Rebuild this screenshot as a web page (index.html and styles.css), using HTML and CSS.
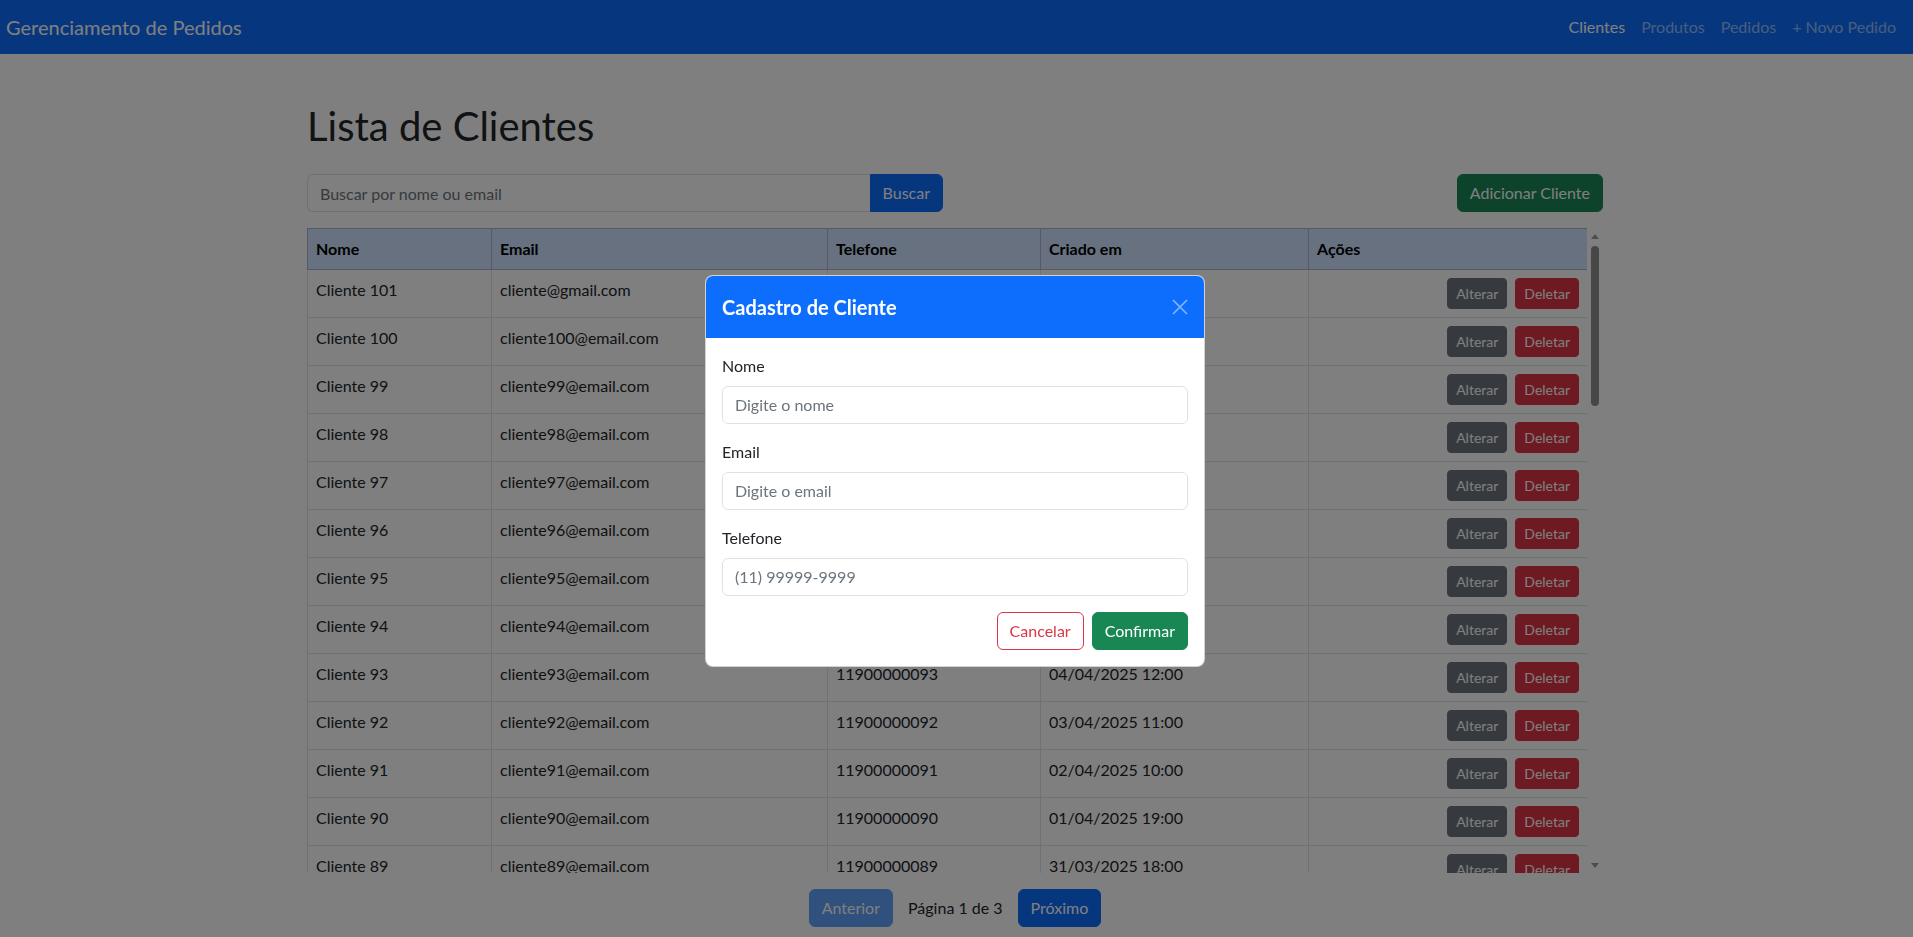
FILE: index.html
```html
<!DOCTYPE html>
<html lang="pt-BR">
<head>
<meta charset="utf-8">
<title>Gerenciamento de Pedidos</title>
<link rel="stylesheet" href="styles.css">
</head>
<body>
<nav class="navbar">
  <a class="brand" href="#">Gerenciamento de Pedidos</a>
  <ul class="nav-links">
    <li><a class="nav-link active" href="#">Clientes</a></li>
    <li><a class="nav-link" href="#">Produtos</a></li>
    <li><a class="nav-link" href="#">Pedidos</a></li>
    <li><a class="nav-link" href="#">+ Novo Pedido</a></li>
  </ul>
</nav>

<main class="container">
  <h1 class="page-title">Lista de Clientes</h1>
  <div class="toolbar">
    <form class="search-group">
      <input class="search-input" type="text" placeholder="Buscar por nome ou email">
      <button class="btn btn-primary" type="button">Buscar</button>
    </form>
    <button class="btn btn-success" type="button">Adicionar Cliente</button>
  </div>

  <div class="table-frame">
    <div class="table-scroll">
      <table class="clients">
        <colgroup>
          <col class="c-nome"><col class="c-email"><col class="c-tel"><col class="c-data"><col class="c-acoes">
        </colgroup>
        <thead>
          <tr><th>Nome</th><th>Email</th><th>Telefone</th><th>Criado em</th><th>Ações</th></tr>
        </thead>
        <tbody>
          <tr><td>Cliente 101</td><td>cliente@gmail.com</td><td>11900000101</td><td>12/04/2025 10:00</td><td><div class="row-actions"><button class="btn btn-sm btn-secondary">Alterar</button><button class="btn btn-sm btn-danger">Deletar</button></div></td></tr>
          <tr><td>Cliente 100</td><td>cliente100@email.com</td><td>11900000100</td><td>11/04/2025 19:00</td><td><div class="row-actions"><button class="btn btn-sm btn-secondary">Alterar</button><button class="btn btn-sm btn-danger">Deletar</button></div></td></tr>
          <tr><td>Cliente 99</td><td>cliente99@email.com</td><td>11900000099</td><td>10/04/2025 18:00</td><td><div class="row-actions"><button class="btn btn-sm btn-secondary">Alterar</button><button class="btn btn-sm btn-danger">Deletar</button></div></td></tr>
          <tr><td>Cliente 98</td><td>cliente98@email.com</td><td>11900000098</td><td>09/04/2025 17:00</td><td><div class="row-actions"><button class="btn btn-sm btn-secondary">Alterar</button><button class="btn btn-sm btn-danger">Deletar</button></div></td></tr>
          <tr><td>Cliente 97</td><td>cliente97@email.com</td><td>11900000097</td><td>08/04/2025 16:00</td><td><div class="row-actions"><button class="btn btn-sm btn-secondary">Alterar</button><button class="btn btn-sm btn-danger">Deletar</button></div></td></tr>
          <tr><td>Cliente 96</td><td>cliente96@email.com</td><td>11900000096</td><td>07/04/2025 15:00</td><td><div class="row-actions"><button class="btn btn-sm btn-secondary">Alterar</button><button class="btn btn-sm btn-danger">Deletar</button></div></td></tr>
          <tr><td>Cliente 95</td><td>cliente95@email.com</td><td>11900000095</td><td>06/04/2025 14:00</td><td><div class="row-actions"><button class="btn btn-sm btn-secondary">Alterar</button><button class="btn btn-sm btn-danger">Deletar</button></div></td></tr>
          <tr><td>Cliente 94</td><td>cliente94@email.com</td><td>11900000094</td><td>05/04/2025 13:00</td><td><div class="row-actions"><button class="btn btn-sm btn-secondary">Alterar</button><button class="btn btn-sm btn-danger">Deletar</button></div></td></tr>
          <tr><td>Cliente 93</td><td>cliente93@email.com</td><td>11900000093</td><td>04/04/2025 12:00</td><td><div class="row-actions"><button class="btn btn-sm btn-secondary">Alterar</button><button class="btn btn-sm btn-danger">Deletar</button></div></td></tr>
          <tr><td>Cliente 92</td><td>cliente92@email.com</td><td>11900000092</td><td>03/04/2025 11:00</td><td><div class="row-actions"><button class="btn btn-sm btn-secondary">Alterar</button><button class="btn btn-sm btn-danger">Deletar</button></div></td></tr>
          <tr><td>Cliente 91</td><td>cliente91@email.com</td><td>11900000091</td><td>02/04/2025 10:00</td><td><div class="row-actions"><button class="btn btn-sm btn-secondary">Alterar</button><button class="btn btn-sm btn-danger">Deletar</button></div></td></tr>
          <tr><td>Cliente 90</td><td>cliente90@email.com</td><td>11900000090</td><td>01/04/2025 19:00</td><td><div class="row-actions"><button class="btn btn-sm btn-secondary">Alterar</button><button class="btn btn-sm btn-danger">Deletar</button></div></td></tr>
          <tr><td>Cliente 89</td><td>cliente89@email.com</td><td>11900000089</td><td>31/03/2025 18:00</td><td><div class="row-actions"><button class="btn btn-sm btn-secondary">Alterar</button><button class="btn btn-sm btn-danger">Deletar</button></div></td></tr>
          <tr><td>Cliente 88</td><td>cliente88@email.com</td><td>11900000088</td><td>30/03/2025 17:00</td><td><div class="row-actions"><button class="btn btn-sm btn-secondary">Alterar</button><button class="btn btn-sm btn-danger">Deletar</button></div></td></tr>
          <tr><td>Cliente 87</td><td>cliente87@email.com</td><td>11900000087</td><td>29/03/2025 16:00</td><td><div class="row-actions"><button class="btn btn-sm btn-secondary">Alterar</button><button class="btn btn-sm btn-danger">Deletar</button></div></td></tr>
          <tr><td>Cliente 86</td><td>cliente86@email.com</td><td>11900000086</td><td>28/03/2025 15:00</td><td><div class="row-actions"><button class="btn btn-sm btn-secondary">Alterar</button><button class="btn btn-sm btn-danger">Deletar</button></div></td></tr>
          <tr><td>Cliente 85</td><td>cliente85@email.com</td><td>11900000085</td><td>27/03/2025 14:00</td><td><div class="row-actions"><button class="btn btn-sm btn-secondary">Alterar</button><button class="btn btn-sm btn-danger">Deletar</button></div></td></tr>
          <tr><td>Cliente 84</td><td>cliente84@email.com</td><td>11900000084</td><td>26/03/2025 13:00</td><td><div class="row-actions"><button class="btn btn-sm btn-secondary">Alterar</button><button class="btn btn-sm btn-danger">Deletar</button></div></td></tr>
          <tr><td>Cliente 83</td><td>cliente83@email.com</td><td>11900000083</td><td>25/03/2025 12:00</td><td><div class="row-actions"><button class="btn btn-sm btn-secondary">Alterar</button><button class="btn btn-sm btn-danger">Deletar</button></div></td></tr>
          <tr><td>Cliente 82</td><td>cliente82@email.com</td><td>11900000082</td><td>24/03/2025 11:00</td><td><div class="row-actions"><button class="btn btn-sm btn-secondary">Alterar</button><button class="btn btn-sm btn-danger">Deletar</button></div></td></tr>
          <tr><td>Cliente 81</td><td>cliente81@email.com</td><td>11900000081</td><td>23/03/2025 10:00</td><td><div class="row-actions"><button class="btn btn-sm btn-secondary">Alterar</button><button class="btn btn-sm btn-danger">Deletar</button></div></td></tr>
          <tr><td>Cliente 80</td><td>cliente80@email.com</td><td>11900000080</td><td>22/03/2025 19:00</td><td><div class="row-actions"><button class="btn btn-sm btn-secondary">Alterar</button><button class="btn btn-sm btn-danger">Deletar</button></div></td></tr>
          <tr><td>Cliente 79</td><td>cliente79@email.com</td><td>11900000079</td><td>21/03/2025 18:00</td><td><div class="row-actions"><button class="btn btn-sm btn-secondary">Alterar</button><button class="btn btn-sm btn-danger">Deletar</button></div></td></tr>
          <tr><td>Cliente 78</td><td>cliente78@email.com</td><td>11900000078</td><td>20/03/2025 17:00</td><td><div class="row-actions"><button class="btn btn-sm btn-secondary">Alterar</button><button class="btn btn-sm btn-danger">Deletar</button></div></td></tr>
          <tr><td>Cliente 77</td><td>cliente77@email.com</td><td>11900000077</td><td>19/03/2025 16:00</td><td><div class="row-actions"><button class="btn btn-sm btn-secondary">Alterar</button><button class="btn btn-sm btn-danger">Deletar</button></div></td></tr>
          <tr><td>Cliente 76</td><td>cliente76@email.com</td><td>11900000076</td><td>18/03/2025 15:00</td><td><div class="row-actions"><button class="btn btn-sm btn-secondary">Alterar</button><button class="btn btn-sm btn-danger">Deletar</button></div></td></tr>
          <tr><td>Cliente 75</td><td>cliente75@email.com</td><td>11900000075</td><td>17/03/2025 14:00</td><td><div class="row-actions"><button class="btn btn-sm btn-secondary">Alterar</button><button class="btn btn-sm btn-danger">Deletar</button></div></td></tr>
          <tr><td>Cliente 74</td><td>cliente74@email.com</td><td>11900000074</td><td>16/03/2025 13:00</td><td><div class="row-actions"><button class="btn btn-sm btn-secondary">Alterar</button><button class="btn btn-sm btn-danger">Deletar</button></div></td></tr>
          <tr><td>Cliente 73</td><td>cliente73@email.com</td><td>11900000073</td><td>15/03/2025 12:00</td><td><div class="row-actions"><button class="btn btn-sm btn-secondary">Alterar</button><button class="btn btn-sm btn-danger">Deletar</button></div></td></tr>
          <tr><td>Cliente 72</td><td>cliente72@email.com</td><td>11900000072</td><td>14/03/2025 11:00</td><td><div class="row-actions"><button class="btn btn-sm btn-secondary">Alterar</button><button class="btn btn-sm btn-danger">Deletar</button></div></td></tr>
          <tr><td>Cliente 71</td><td>cliente71@email.com</td><td>11900000071</td><td>13/03/2025 10:00</td><td><div class="row-actions"><button class="btn btn-sm btn-secondary">Alterar</button><button class="btn btn-sm btn-danger">Deletar</button></div></td></tr>
          <tr><td>Cliente 70</td><td>cliente70@email.com</td><td>11900000070</td><td>12/03/2025 19:00</td><td><div class="row-actions"><button class="btn btn-sm btn-secondary">Alterar</button><button class="btn btn-sm btn-danger">Deletar</button></div></td></tr>
          <tr><td>Cliente 69</td><td>cliente69@email.com</td><td>11900000069</td><td>11/03/2025 18:00</td><td><div class="row-actions"><button class="btn btn-sm btn-secondary">Alterar</button><button class="btn btn-sm btn-danger">Deletar</button></div></td></tr>
          <tr><td>Cliente 68</td><td>cliente68@email.com</td><td>11900000068</td><td>10/03/2025 17:00</td><td><div class="row-actions"><button class="btn btn-sm btn-secondary">Alterar</button><button class="btn btn-sm btn-danger">Deletar</button></div></td></tr>
          <tr><td>Cliente 67</td><td>cliente67@email.com</td><td>11900000067</td><td>09/03/2025 16:00</td><td><div class="row-actions"><button class="btn btn-sm btn-secondary">Alterar</button><button class="btn btn-sm btn-danger">Deletar</button></div></td></tr>
          <tr><td>Cliente 66</td><td>cliente66@email.com</td><td>11900000066</td><td>08/03/2025 15:00</td><td><div class="row-actions"><button class="btn btn-sm btn-secondary">Alterar</button><button class="btn btn-sm btn-danger">Deletar</button></div></td></tr>
          <tr><td>Cliente 65</td><td>cliente65@email.com</td><td>11900000065</td><td>07/03/2025 14:00</td><td><div class="row-actions"><button class="btn btn-sm btn-secondary">Alterar</button><button class="btn btn-sm btn-danger">Deletar</button></div></td></tr>
          <tr><td>Cliente 64</td><td>cliente64@email.com</td><td>11900000064</td><td>06/03/2025 13:00</td><td><div class="row-actions"><button class="btn btn-sm btn-secondary">Alterar</button><button class="btn btn-sm btn-danger">Deletar</button></div></td></tr>
          <tr><td>Cliente 63</td><td>cliente63@email.com</td><td>11900000063</td><td>05/03/2025 12:00</td><td><div class="row-actions"><button class="btn btn-sm btn-secondary">Alterar</button><button class="btn btn-sm btn-danger">Deletar</button></div></td></tr>
          <tr><td>Cliente 62</td><td>cliente62@email.com</td><td>11900000062</td><td>04/03/2025 11:00</td><td><div class="row-actions"><button class="btn btn-sm btn-secondary">Alterar</button><button class="btn btn-sm btn-danger">Deletar</button></div></td></tr>
          <tr><td>Cliente 61</td><td>cliente61@email.com</td><td>11900000061</td><td>03/03/2025 10:00</td><td><div class="row-actions"><button class="btn btn-sm btn-secondary">Alterar</button><button class="btn btn-sm btn-danger">Deletar</button></div></td></tr>
          <tr><td>Cliente 60</td><td>cliente60@email.com</td><td>11900000060</td><td>02/03/2025 19:00</td><td><div class="row-actions"><button class="btn btn-sm btn-secondary">Alterar</button><button class="btn btn-sm btn-danger">Deletar</button></div></td></tr>
          <tr><td>Cliente 59</td><td>cliente59@email.com</td><td>11900000059</td><td>01/03/2025 18:00</td><td><div class="row-actions"><button class="btn btn-sm btn-secondary">Alterar</button><button class="btn btn-sm btn-danger">Deletar</button></div></td></tr>
          <tr><td>Cliente 58</td><td>cliente58@email.com</td><td>11900000058</td><td>28/02/2025 17:00</td><td><div class="row-actions"><button class="btn btn-sm btn-secondary">Alterar</button><button class="btn btn-sm btn-danger">Deletar</button></div></td></tr>
          <tr><td>Cliente 57</td><td>cliente57@email.com</td><td>11900000057</td><td>27/02/2025 16:00</td><td><div class="row-actions"><button class="btn btn-sm btn-secondary">Alterar</button><button class="btn btn-sm btn-danger">Deletar</button></div></td></tr>
          <tr><td>Cliente 56</td><td>cliente56@email.com</td><td>11900000056</td><td>26/02/2025 15:00</td><td><div class="row-actions"><button class="btn btn-sm btn-secondary">Alterar</button><button class="btn btn-sm btn-danger">Deletar</button></div></td></tr>
          <tr><td>Cliente 55</td><td>cliente55@email.com</td><td>11900000055</td><td>25/02/2025 14:00</td><td><div class="row-actions"><button class="btn btn-sm btn-secondary">Alterar</button><button class="btn btn-sm btn-danger">Deletar</button></div></td></tr>
          <tr><td>Cliente 54</td><td>cliente54@email.com</td><td>11900000054</td><td>24/02/2025 13:00</td><td><div class="row-actions"><button class="btn btn-sm btn-secondary">Alterar</button><button class="btn btn-sm btn-danger">Deletar</button></div></td></tr>
          <tr><td>Cliente 53</td><td>cliente53@email.com</td><td>11900000053</td><td>23/02/2025 12:00</td><td><div class="row-actions"><button class="btn btn-sm btn-secondary">Alterar</button><button class="btn btn-sm btn-danger">Deletar</button></div></td></tr>
          <tr><td>Cliente 52</td><td>cliente52@email.com</td><td>11900000052</td><td>22/02/2025 11:00</td><td><div class="row-actions"><button class="btn btn-sm btn-secondary">Alterar</button><button class="btn btn-sm btn-danger">Deletar</button></div></td></tr>
        </tbody>
      </table>
    </div>
    <div class="scrollbar" aria-hidden="true">
      <span class="sb-arrow sb-up"></span>
      <span class="sb-track"><span class="sb-thumb"></span></span>
      <span class="sb-arrow sb-down"></span>
    </div>
  </div>

  <div class="pager">
    <button class="btn btn-primary" type="button" disabled>Anterior</button>
    <span class="pager-info">Página 1 de 3</span>
    <button class="btn btn-primary" type="button">Próximo</button>
  </div>
</main>

<div class="backdrop"></div>

<div class="modal" role="dialog" aria-modal="true">
  <div class="modal-dialog">
    <div class="modal-content">
      <div class="modal-header">
        <h5 class="modal-title">Cadastro de Cliente</h5>
        <button class="btn-close" type="button" aria-label="Fechar">
          <svg viewBox="0 0 16 16" width="16" height="16"><path d="M1 1L15 15M15 1L1 15" stroke="#fff" stroke-width="1.6" fill="none"/></svg>
        </button>
      </div>
      <div class="modal-body">
        <div class="field">
          <label class="form-label" for="nome">Nome</label>
          <input class="form-control" id="nome" type="text" placeholder="Digite o nome">
        </div>
        <div class="field">
          <label class="form-label" for="email">Email</label>
          <input class="form-control" id="email" type="text" placeholder="Digite o email">
        </div>
        <div class="field">
          <label class="form-label" for="tel">Telefone</label>
          <input class="form-control" id="tel" type="text" placeholder="(11) 99999-9999">
        </div>
        <div class="modal-actions">
          <button class="btn btn-outline-danger" type="button">Cancelar</button>
          <button class="btn btn-success" type="button">Confirmar</button>
        </div>
      </div>
    </div>
  </div>
</div>
</body>
</html>
```

FILE: styles.css
```css
*, *::before, *::after { box-sizing: border-box; }

body {
  margin: 0;
  padding-right: 3px;
  font-family: Lato, "Noto Sans", "Liberation Sans", sans-serif;
  font-size: 16px;
  line-height: 1.5;
  color: #212529;
  background: #fff;
}

/* Navbar */
.navbar {
  display: flex;
  align-items: center;
  justify-content: space-between;
  height: 54px;
  margin-right: -3px;
  padding: 0 9px 0 6px;
  background: #0d6efd;
}
.brand {
  color: #fff;
  font-size: 20px;
  line-height: 30px;
  text-decoration: none;
}
.nav-links {
  display: flex;
  list-style: none;
  margin: 0;
  padding: 0;
}
.nav-link {
  display: block;
  padding: 8px;
  color: rgba(255, 255, 255, 0.55);
  text-decoration: none;
}
.nav-link.active { color: #fff; }

/* Layout */
.container {
  max-width: 1320px;
  margin: 0 auto;
  padding: 48px 12px 0;
}
.page-title {
  margin: 0 0 24px;
  font-size: 40px;
  font-weight: 400;
  line-height: 1.2;
}
.toolbar {
  display: flex;
  justify-content: space-between;
  align-items: center;
  margin-bottom: 16px;
}
.search-group {
  display: flex;
  width: 636px;
  margin: 0;
}
.search-input {
  flex: 1;
  min-width: 0;
  height: 38px;
  padding: 6px 12px;
  font: inherit;
  color: #212529;
  background: #fff;
  border: 1px solid #dee2e6;
  border-right: 0;
  border-radius: 6px 0 0 6px;
}
.search-input::placeholder { color: #6c757d; }

/* Buttons */
.btn {
  display: inline-block;
  padding: 6px 12px;
  font-family: inherit;
  font-size: 16px;
  line-height: 24px;
  border: 1px solid transparent;
  border-radius: 6px;
  cursor: pointer;
  white-space: nowrap;
}
.btn-primary { background: #0d6efd; border-color: #0d6efd; color: #fff; }
.btn-primary:disabled { opacity: 0.65; }
.btn-success { background: #198754; border-color: #198754; color: #fff; }
.btn-secondary { background: #6c757d; border-color: #6c757d; color: #fff; }
.btn-danger { background: #dc3545; border-color: #dc3545; color: #fff; }
.btn-outline-danger { background: transparent; border-color: #dc3545; color: #dc3545; }
.btn-sm {
  padding: 4px 8px;
  font-size: 14px;
  line-height: 21px;
  border-radius: 4px;
}
.search-group .btn { border-radius: 0 6px 6px 0; }

/* Table with its scrollbar */
.table-frame {
  display: flex;
  height: 645px;
}
.table-scroll {
  flex: 1;
  min-width: 0;
  overflow-y: auto;
  overflow-x: hidden;
  scrollbar-width: none;
}
.scrollbar {
  flex: 0 0 16px;
  display: flex;
  flex-direction: column;
  background: #fff;
}
.sb-arrow {
  flex: 0 0 16px;
  display: flex;
  align-items: center;
  justify-content: center;
}
.sb-up::before,
.sb-down::before {
  content: "";
  width: 0;
  height: 0;
  border-left: 4px solid transparent;
  border-right: 4px solid transparent;
}
.sb-up::before { border-bottom: 5px solid #9a9a9a; }
.sb-down::before { border-top: 5px solid #9a9a9a; }
.sb-track {
  flex: 1;
  display: block;
  padding: 2px 4px 0;
}
.sb-thumb {
  display: block;
  height: 160px;
  border-radius: 4px;
  background: #8e8e8e;
}

.clients {
  width: 100%;
  table-layout: fixed;
  border-collapse: collapse;
}
.c-nome { width: 184px; }
.c-email { width: 336px; }
.c-tel { width: 213px; }
.c-data { width: 268px; }
.c-acoes { width: 279px; }

.clients th,
.clients td {
  padding: 8px;
  text-align: left;
  vertical-align: top;
  border: 1px solid #dee2e6;
  white-space: nowrap;
  overflow: hidden;
}
.clients thead th {
  background: #cfe2ff;
  border-color: #a6b5cc;
  color: #000;
  font-weight: 700;
}
.row-actions {
  display: flex;
  justify-content: flex-end;
  gap: 8px;
}

/* Pager */
.pager {
  display: flex;
  justify-content: center;
  align-items: center;
  gap: 15px;
  margin-top: 16px;
}

/* Modal */
.backdrop {
  position: fixed;
  inset: 0;
  background: rgba(0, 0, 0, 0.5);
  z-index: 1050;
}
.modal {
  position: fixed;
  inset: 0;
  z-index: 1055;
  display: flex;
  align-items: center;
  justify-content: center;
  padding: 4px 3px 0 0;
}
.modal-dialog { width: 500px; }
.modal-content {
  background: #fff;
  border: 1px solid rgba(0, 0, 0, 0.175);
  border-radius: 8px;
  overflow: hidden;
}
.modal-header {
  display: flex;
  align-items: center;
  justify-content: space-between;
  padding: 16px;
  background: #0d6efd;
  color: #fff;
}
.modal-title {
  margin: 0;
  font-size: 20px;
  line-height: 30px;
  font-weight: 700;
}
.btn-close {
  display: flex;
  width: 16px;
  height: 16px;
  padding: 0;
  border: 0;
  background: transparent;
  opacity: 0.5;
  cursor: pointer;
}
.modal-body { padding: 16px; }
.field { margin-bottom: 16px; }
.form-label {
  display: block;
  margin-bottom: 8px;
}
.form-control {
  display: block;
  width: 100%;
  height: 38px;
  padding: 6px 12px;
  font: inherit;
  color: #212529;
  background: #fff;
  border: 1px solid #dee2e6;
  border-radius: 6px;
}
.form-control::placeholder { color: #6c757d; }
.modal-actions {
  display: flex;
  justify-content: flex-end;
  gap: 8px;
}
```
